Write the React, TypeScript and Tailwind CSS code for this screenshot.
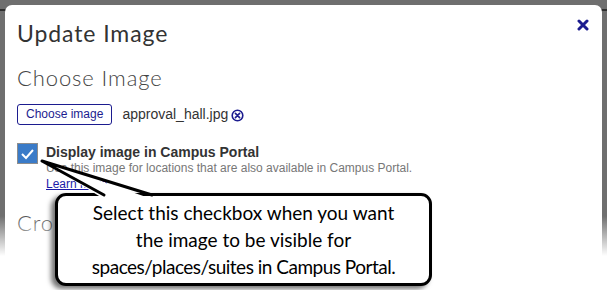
import React from "react";

export default function App() {
  return (
    <div className="relative w-[607px] h-[290px] overflow-hidden bg-[#6f6f6f]">
      {/* background page behind overlay */}
      <div className="h-[11px] border-b-2 border-[#2f2f2f]" />
      <div className="pt-[50px] pl-0 text-[16px] text-[#1a1a9a] underline" style={{ fontFamily: "Arial, 'Liberation Sans', sans-serif" }}>
        <span className="ml-[-9px]">a</span>
      </div>
      {/* modal */}
      <div
        className="absolute left-[5px] top-[5px] w-[597px] h-[300px] bg-white rounded-t-[7px] px-[12px] pt-[14px]"
        style={{ fontFamily: "Lato, 'Open Sans', sans-serif" }}
      >
        <div className="flex items-start justify-between">
          <h1 className="text-[23px] leading-[28px] text-[#333] tracking-[0.9px]">Update Image</h1>
          <svg width="12" height="12" viewBox="0 0 12 12" className="mt-[0px] mr-[1px]">
            <path d="M2 2 L10 10 M10 2 L2 10" stroke="#1c1c8f" strokeWidth="3" strokeLinecap="round" />
          </svg>
        </div>
        <h2 className="mt-[18px] text-[22px] leading-[26px] font-light text-[#444] tracking-[0.9px]">Choose Image</h2>
        <div className="mt-[13px] flex items-center" style={{ fontFamily: "Arial, 'Liberation Sans', sans-serif" }}>
          <button className="h-[21px] px-[8px] border border-[#1c1c8f] rounded-[3px] text-[12px] text-[#1c1c8f] bg-white leading-[19px]">
            Choose image
          </button>
          <span className="ml-[10px] text-[14px] text-[#333]">approval_hall.jpg</span>
          <svg width="13" height="13" viewBox="0 0 13 13" className="ml-[3px] mt-[1px]">
            <circle cx="6.5" cy="6.5" r="5.3" fill="none" stroke="#1c1c8f" strokeWidth="1.6" />
            <path d="M4.4 4.4 L8.6 8.6 M8.6 4.4 L4.4 8.6" stroke="#1c1c8f" strokeWidth="1.6" strokeLinecap="round" />
          </svg>
        </div>
        <div className="mt-[18px] flex items-start" style={{ fontFamily: "Arial, 'Liberation Sans', sans-serif" }}>
          <div className="w-[21px] h-[21px] shrink-0 bg-[#3a7bc8] border border-[#8d8d8d] flex items-center justify-center">
            <svg width="15" height="12" viewBox="0 0 15 12">
              <path d="M2 6 L6 10 L13 2" fill="none" stroke="white" strokeWidth="2" />
            </svg>
          </div>
          <div className="ml-[8px] flex flex-col">
            <span className="mt-[1px] text-[14px] leading-[16px] font-bold text-[#333]">Display image in Campus Portal</span>
            <span className="text-[12px] leading-[17px] text-[#777]">Use this image for locations that are also available in Campus Portal.</span>
            <span className="text-[12px] leading-[14px] text-[#1a1aa8] underline">Learn more</span>
          </div>
        </div>
        <h2 className="mt-[19px] text-[22px] leading-[26px] font-light text-[#555] tracking-[0.9px]">Crop Image</h2>
      </div>
      {/* bottom fade of the screenshot */}
      <div className="absolute left-0 right-0 top-[216px] h-[40px] bg-gradient-to-b from-transparent to-white" />
      <div className="absolute left-0 right-0 top-[256px] bottom-0 bg-white" />
      {/* callout */}
      <div
        className="absolute left-[55px] top-[193px] w-[377px] h-[93px] bg-white border-[3px] border-black rounded-[11px] shadow-[-4px_3px_5px_rgba(0,0,0,0.55)] flex flex-col items-center justify-center text-[19px] leading-[27px] text-black"
        style={{ fontFamily: "Lato, 'Open Sans', sans-serif" }}
      >
        <span>Select this checkbox when you want</span>
        <span>the image to be visible for</span>
        <span className="tracking-[-0.5px]">spaces/places/suites in Campus Portal.</span>
      </div>
      <svg className="absolute left-0 top-0" width="607" height="290" viewBox="0 0 607 290">
        <polygon points="42,161 104,199 152,199" fill="white" />
        <path d="M42 161 L104 195 M42 161 L152 195" stroke="black" strokeWidth="3" fill="none" strokeLinecap="round" />
      </svg>
    </div>
  );
}
